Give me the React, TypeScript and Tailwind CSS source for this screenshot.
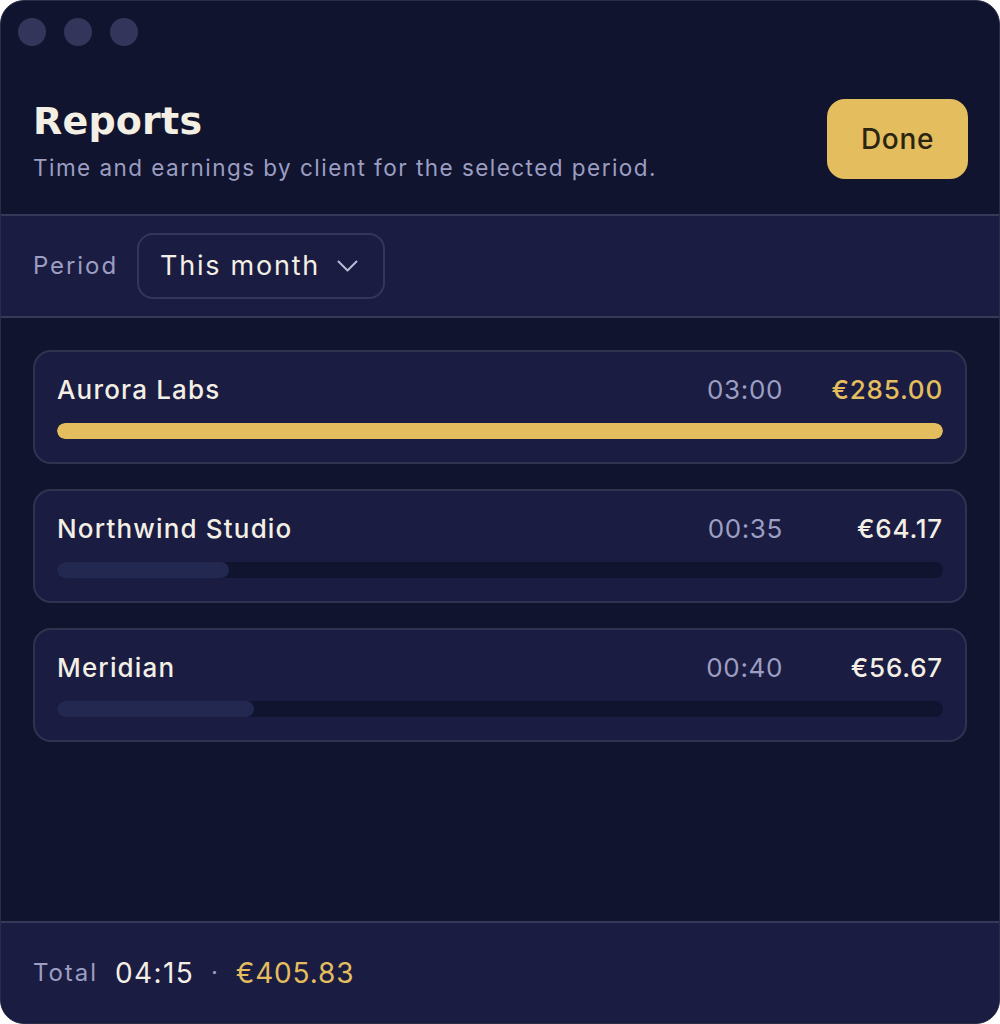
interface ClientRow {
  name: string;
  minutes: number;
  amount: string;
  top?: boolean;
}

const rows: ClientRow[] = [
  { name: "Aurora Labs", minutes: 180, amount: "€285.00", top: true },
  { name: "Northwind Studio", minutes: 35, amount: "€64.17" },
  { name: "Meridian", minutes: 40, amount: "€56.67" },
];

const fmt = (m: number) =>
  `${String(Math.floor(m / 60)).padStart(2, "0")}:${String(m % 60).padStart(2, "0")}`;

function Chevron() {
  return (
    <svg width="21" height="13" viewBox="0 0 21 13" fill="none" className="text-[#b9bbd2]">
      <path d="M1.5 1.5L10.5 10.5L19.5 1.5" stroke="currentColor" strokeWidth="2" strokeLinecap="round" strokeLinejoin="round" />
    </svg>
  );
}

export default function App() {
  const max = Math.max(...rows.map((r) => r.minutes));

  return (
    <div className="w-[1000px] h-[1024px] bg-white font-['Inter',sans-serif] tracking-[0.04em]">
      <div className="h-full flex flex-col rounded-[24px] overflow-hidden bg-[#10142f] border border-[#2a2d48]">
        {/* Traffic lights */}
        <div className="flex gap-[18px] pl-[17px] pt-[17px]">
          <span className="w-7 h-7 rounded-full bg-[#33365a]" />
          <span className="w-7 h-7 rounded-full bg-[#33365a]" />
          <span className="w-7 h-7 rounded-full bg-[#33365a]" />
        </div>

        {/* Header */}
        <div className="flex items-start justify-between pl-[32px] pr-[31px] pt-[53px] pb-[31px]">
          <div className="flex flex-col gap-[10px] pt-[1px]">
            <h1 className="text-[38px] leading-[43px] font-bold text-[#f3efe4] tracking-[0.005em] font-['DejaVu_Sans',sans-serif]">
              Reports
            </h1>
            <p className="text-[22.5px] leading-[30px] text-[#9c9ec2] tracking-[0.065em]">
              Time and earnings by client for the selected period.
            </p>
          </div>
          <button className="w-[141px] h-[80px] rounded-[18px] bg-[#e3bd5e] text-[#2a2410] text-[28px] font-medium">
            Done
          </button>
        </div>

        {/* Period */}
        <div className="border-y-2 border-[#363a58] bg-[#1a1c42] h-[104px] flex items-center pl-[32px] gap-[19px]">
          <span className="text-[24px] text-[#9c9ec2] tracking-[0.08em]">Period</span>
          <div className="h-[66px] w-[248px] rounded-[16px] border-2 border-[#34375a] flex items-center justify-between pl-[21px] pr-[25px]">
            <span className="text-[27px] text-[#f3efe4] tracking-[0.065em]">This month</span>
            <Chevron />
          </div>
        </div>

        {/* Clients */}
        <div className="flex-1 flex flex-col gap-[25px] px-[32px] pt-[32px]">
          {rows.map((r) => (
            <div
              key={r.name}
              className="rounded-[18px] border-2 border-[#30334f] bg-[#1a1c42] px-[22px] pt-[21px] pb-[23px]"
            >
              <div className="flex items-center h-[32px]">
                <span className="flex-1 text-[26px] font-medium text-[#f3efe4] tracking-[0.045em]">{r.name}</span>
                <span className="text-[26px] text-[#9c9ec2]">{fmt(r.minutes)}</span>
                <span
                  className={`w-[160px] text-right text-[26px] font-medium tracking-[0.03em] ${
                    r.top ? "text-[#e3bd5e]" : "text-[#f3efe4]"
                  }`}
                >
                  {r.amount}
                </span>
              </div>
              <div className="mt-[18px] h-[16px] rounded-full bg-[#10142f] overflow-hidden">
                <div
                  className={`h-full rounded-full ${r.top ? "bg-[#e3bd5e]" : "bg-[#232850]"}`}
                  style={{ width: `${(r.minutes / max) * 100}%` }}
                />
              </div>
            </div>
          ))}
        </div>

        {/* Footer */}
        <div className="border-t-2 border-[#363a58] bg-[#1a1c42] h-[102px] flex items-center pl-[32px] gap-[17px]">
          <span className="text-[24px] text-[#9c9ec2] tracking-[0.08em]">Total</span>
          <span className="text-[28px] text-[#f3efe4] tracking-[0.05em]">{fmt(255)}</span>
          <span className="text-[24px] text-[#9c9ec2]">·</span>
          <span className="text-[28px] text-[#e3bd5e] tracking-[0.03em]">€405.83</span>
        </div>
      </div>
    </div>
  );
}
